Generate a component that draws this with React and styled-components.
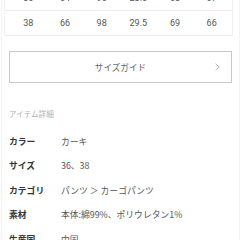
import React from "react";
import styled, { createGlobalStyle } from "styled-components";

const Global = createGlobalStyle`
  html, body { margin: 0; padding: 0; background: #fff; overflow: hidden; }
  body { font-family: "Noto Sans CJK JP", "Noto Sans", sans-serif; }
`;

const Page = styled.div`
  margin: -14px 0 0 1px;
  width: 239px;
  box-sizing: border-box;
  border-left: 1px solid #f3f3f3;
  border-right: 1px solid #f3f3f3;
  min-height: 300px;
`;

const Table = styled.div`
  margin: 0 6px 0 2px;
  border-left: 1px solid #f0f0f0;
  border-right: 1px solid #f0f0f0;
`;

const TRow = styled.div`
  display: grid;
  grid-template-columns: repeat(6, 1fr);
  padding: 0 2px 0 5px;
  height: 25px;
  align-items: center;
  border-bottom: 1px solid #ececec;
  box-sizing: border-box;
`;

const Cell = styled.div`
  text-align: center;
  font-family: "Roboto", "Noto Sans CJK JP", sans-serif;
  font-size: 9px;
  color: #555;
`;

const Guide = styled.button`
  display: flex;
  align-items: center;
  justify-content: center;
  position: relative;
  margin: 15px 7px 0 7px;
  width: calc(100% - 14px);
  height: 32px;
  box-sizing: border-box;
  border: 1px solid #c8c8c8;
  background: #fff;
  font-family: "Noto Sans CJK JP", sans-serif;
  font-size: 8.6px;
  color: #666;
  padding: 0;
`;

const Chevron = styled.svg`
  position: absolute;
  right: 11px;
  top: 50%;
  transform: translateY(-50%);
`;

const SectionTitle = styled.div`
  margin: 24px 0 0 7px;
  font-size: 7.6px;
  line-height: 14px;
  color: #b0b0b0;
`;

const Specs = styled.div`
  margin-top: 8px;
  padding-left: 7px;
`;

const SpecRow = styled.div`
  display: grid;
  grid-template-columns: 52px 1fr;
  height: 24.5px;
  align-items: center;
  font-size: 8.8px;
`;

const Label = styled.div`
  color: #333;
  font-weight: 700;
`;

const Value = styled.div`
  color: #555;
`;

const rows = [
  ["36", "64", "96", "28.5", "68", "67"],
  ["38", "66", "98", "29.5", "69", "66"],
];

const specs = [
  ["カラー", "カーキ"],
  ["サイズ", "36、38"],
  ["カテゴリ", "パンツ ＞ カーゴパンツ"],
  ["素材", "本体:綿99%、ポリウレタン1%"],
  ["生産国", "中国"],
];

export default function App() {
  return (
    <>
      <Global />
      <Page>
        <Table>
          {rows.map((r, i) => (
            <TRow key={i}>
              {r.map((c, j) => (
                <Cell key={j}>{c}</Cell>
              ))}
            </TRow>
          ))}
        </Table>
        <Guide>
          サイズガイド
          <Chevron width="5" height="8" viewBox="0 0 5 8">
            <path d="M0.6 0.6 L4.2 4 L0.6 7.4" fill="none" stroke="#aaa" strokeWidth="0.9" />
          </Chevron>
        </Guide>
        <SectionTitle>アイテム詳細</SectionTitle>
        <Specs>
          {specs.map(([l, v]) => (
            <SpecRow key={l}>
              <Label>{l}</Label>
              <Value>{v}</Value>
            </SpecRow>
          ))}
        </Specs>
      </Page>
    </>
  );
}
